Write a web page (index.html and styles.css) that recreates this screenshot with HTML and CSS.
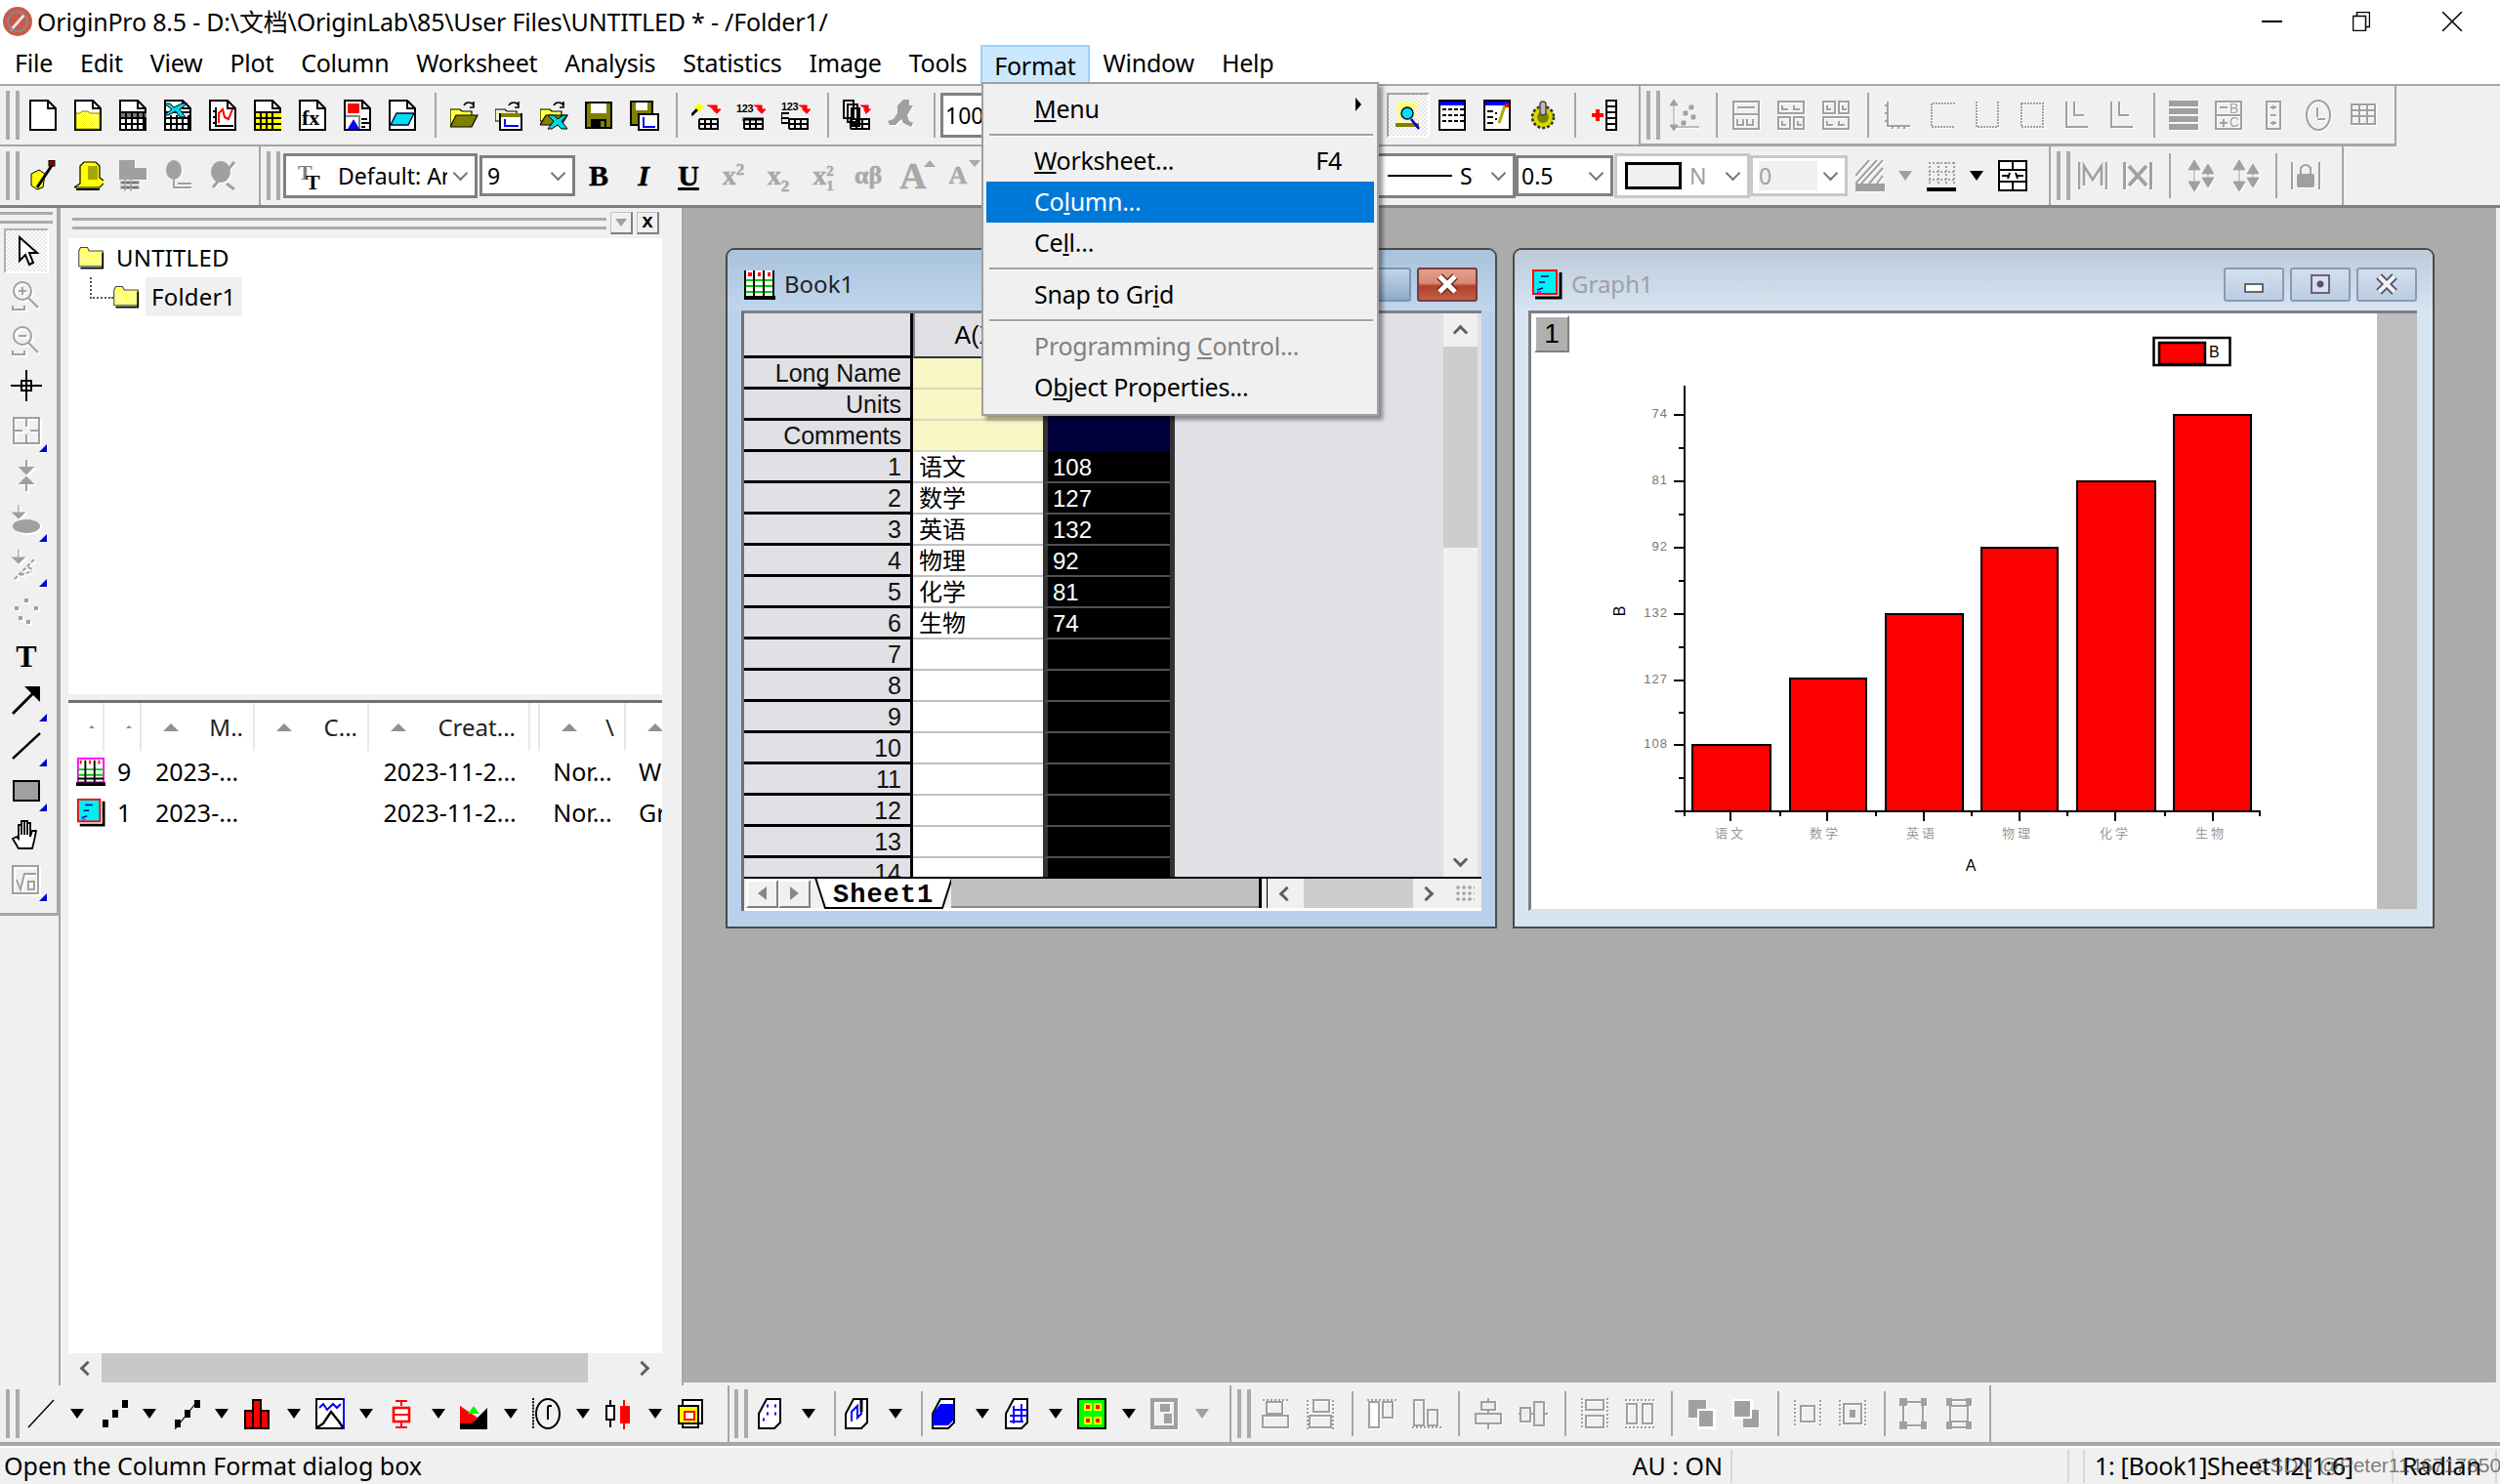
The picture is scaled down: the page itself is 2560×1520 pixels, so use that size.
FILE: index.html
```html
<!DOCTYPE html>
<html lang="en">
<head>
  <meta charset="UTF-8">
  <link rel="stylesheet" href="styles.css">
  <title>OriginPro 8.5</title>
</head>
<body>

<!-- icon sheet -->
<svg class="defs" width="0" height="0">
  <defs>
    <pattern id="dy" width="1" height="1" patternUnits="userSpaceOnUse"><rect width="1" height="1" fill="#ffff00"/><rect width=".5" height=".5" fill="#fff"/><rect x=".5" y=".5" width=".5" height=".5" fill="#fff"/></pattern>
    <symbol id="s-page" viewBox="0 0 15 16"><path d="M.5.5h9l4 4v11H.5z" fill="#fff" stroke="#000"/><path d="M9.5.5v4h4" fill="none" stroke="#000"/></symbol>
    <symbol id="s-fold" viewBox="0 0 15 16"><use href="#s-page"/><path d="M1 7h2l1-1h3l1 1h5v8H1z" fill="url(#dy)" stroke="#808000" stroke-width=".5"/></symbol>
    <symbol id="s-wks" viewBox="0 0 15 16"><use href="#s-page"/><rect x="1" y="6" width="13" height="3" fill="#777"/><path d="M0 6.5h14M0 9.5h14M0 12.5h14M3.5 6v9M6.5 6v9M9.5 6v9M12.5 6v9" stroke="#000" fill="none"/></symbol>
    <symbol id="s-xl" viewBox="0 0 15 16"><use href="#s-page"/><path d="M1 6.5h13M1 9.5h13M1 12.5h13M3.5 8v7M6.5 8v7M9.5 8v7M12.5 8v7" stroke="#000" fill="none"/><path d="M0 2h3l2 2 4-2 3 0-4 3 3 4h-3L6 6 2 8H0l4-3z" fill="#00d8e8" stroke="#000" stroke-width=".5"/></symbol>
    <symbol id="s-gr" viewBox="0 0 15 16"><use href="#s-page"/><path d="M3.5 4v9.500h9M2 12h2M2 9h2M2 6h2M6 14v-1M9 14v-1" stroke="#000" fill="none"/><path d="M5 12V7l2-2 1 4 2 1 2-5" stroke="#f00" fill="none"/></symbol>
    <symbol id="s-mat" viewBox="0 0 15 16"><use href="#s-page"/><rect x="1" y="6" width="13" height="9" fill="#ff0"/><path d="M0 6.500h14M0 9.500h14M0 12.500h14M3.500 6v9M6.500 6v9M9.500 6v9" stroke="#000" fill="none"/></symbol>
    <symbol id="s-fx" viewBox="0 0 15 16"><use href="#s-page"/><text x="1.500" y="13" class="ic-tx">fx</text></symbol>
    <symbol id="s-lay" viewBox="0 0 15 16"><use href="#s-page"/><rect x="2" y="2" width="6" height="5" fill="#f00"/><path d="M1 8.500h7M8 8v7" stroke="#888"/><path d="M2 15l3-5 3 5z" fill="#00f"/><path d="M9 10h3M9 12h4M9 14h2" stroke="#000"/></symbol>
    <symbol id="s-note" viewBox="0 0 15 16"><use href="#s-page"/><path d="M4 7h9l-3 6H1z" fill="#00e0f0" stroke="#004" stroke-width=".7"/></symbol>
    <symbol id="s-open" viewBox="0 0 15 16"><path d="M0 5h5l1 1h5v7H0z" fill="url(#dy)" stroke="#000" stroke-width=".6"/><path d="M0 14l3-6h11l-3 6z" fill="#808000" stroke="#000" stroke-width=".6"/><path d="M7 3c1-2 4-2 5 0M12 1v3h-2" stroke="#000" fill="none" stroke-width=".8"/></symbol>
    <symbol id="s-openp" viewBox="0 0 15 16"><path d="M0 5h5l1 1h5v5H0z" fill="url(#dy)" stroke="#000" stroke-width=".6"/><path d="M7 3c1-2 4-2 5 0M12 1v3h-2" stroke="#000" fill="none" stroke-width=".8"/><path d="M2.500 7.500h11v8h-11z" fill="#fff" stroke="#000"/><rect x="3" y="7" width="10" height="2" fill="#808000"/><path d="M5 10v3.500h7" stroke="#00f" fill="none"/></symbol>
    <symbol id="s-openx" viewBox="0 0 15 16"><path d="M0 5h5l1 1h5v5H0z" fill="url(#dy)" stroke="#000" stroke-width=".6"/><path d="M0 13l3-5h11l-3 5z" fill="#808000" stroke="#000" stroke-width=".6"/><path d="M7 3c1-2 4-2 5 0M12 1v3h-2" stroke="#000" fill="none" stroke-width=".8"/><path d="M4 8h3l2 2 3-2h2l-3 3 3 4h-3l-2-2-3 2H4l3-4z" fill="#00d8e8" stroke="#000" stroke-width=".5"/></symbol>
    <symbol id="s-save" viewBox="0 0 15 16"><rect x=".5" y="1.500" width="13" height="13" fill="#808000" stroke="#000"/><rect x="3" y="2" width="8" height="5" fill="#fff"/><rect x="3" y="10" width="8" height="5" fill="#000"/><rect x="8" y="11" width="2" height="3" fill="#808000"/></symbol>
    <symbol id="s-savep" viewBox="0 0 15 16"><rect x=".5" y="1" width="11" height="12" fill="#808000" stroke="#000"/><rect x="3" y="1.500" width="6" height="4" fill="#fff"/><rect x="4.500" y="7.500" width="10" height="8" fill="#fff" stroke="#000"/><path d="M7 9v5h6" stroke="#00f" fill="none"/></symbol>
    <symbol id="s-sheet" viewBox="0 0 15 16"><path d="M4 10h10M4 12.500h10M4 15h10M4 10v5M7 10v5M10 10v5M13.500 10v5" stroke="#000" fill="none"/></symbol>
    <symbol id="s-wiz" viewBox="0 0 15 16"><use href="#s-sheet"/><path d="M0 8l4-4" stroke="#000" stroke-width="1.500"/><path d="M4 1l1 2 2 1-2 1-1 2-1-2-2-1 2-1z" fill="#ff0"/><path d="M8 3h5v3M11 5h4l-2 2z" stroke="#f00" fill="#f00" stroke-width=".6"/></symbol>
    <symbol id="s-num" viewBox="0 0 15 16"><rect x="3" y="9" width="11" height="2" fill="#777"/><use href="#s-sheet"/><text x="0" y="6.500" class="ic-num">123</text><path d="M9 3h4v3M11 5h4l-2 2z" stroke="#f00" fill="#f00" stroke-width=".6"/></symbol>
    <symbol id="s-num2" viewBox="0 0 15 16"><use href="#s-sheet"/><path d="M0 7h4M0 9.500h4M0 12h4M0 7v5" stroke="#000" fill="none"/><text x="0" y="5.500" class="ic-num">123</text><path d="M9 3h4v3M11 5h4l-2 2z" stroke="#f00" fill="#f00" stroke-width=".6"/></symbol>
    <symbol id="s-pages" viewBox="0 0 15 16"><path d="M.5.500h5v9h-5zM2.500 2.500h5v9h-5zM4.500 4.500h4v9h-4z" fill="#fff" stroke="#000"/><use href="#s-sheet"/><path d="M9 3h4v3M11 5h3l-2 2z" stroke="#f00" fill="#f00" stroke-width=".6"/></symbol>
    <symbol id="s-run" viewBox="0 0 15 16"><path d="M8 0h3v3h2l-3 5 1 3 2 1-1 2-4-2-1-2-3 3H1l-1-2 3-1 2-3 0-4z" fill="#a0a0a0"/></symbol>
    <symbol id="s-find" viewBox="0 0 15 16"><rect x="2" y="1" width="10" height="12" fill="url(#dy)"/><rect x="1" y="12" width="12" height="2" fill="#808000"/><circle cx="7" cy="7" r="3" fill="#00e0f0" stroke="#004" stroke-width=".7"/><path d="M9 10l4 5" stroke="#00c" stroke-width="1.300"/></symbol>
    <symbol id="s-cal" viewBox="0 0 15 16"><rect x=".5" y=".5" width="13" height="15" fill="#fff" stroke="#000"/><rect x="1" y="1" width="12" height="2" fill="#00f"/><path d="M2 5h11M2 8h11M2 11h11" stroke="#000" stroke-dasharray="2 1"/></symbol>
    <symbol id="s-edit" viewBox="0 0 15 16"><rect x=".5" y=".5" width="13" height="15" fill="#fff" stroke="#000"/><rect x="1" y="1" width="12" height="2" fill="#00f"/><path d="M2 6h3M2 9h3M2 12h3M6 7h1M6 10h1" stroke="#000"/><path d="M8 12l3-9" stroke="#aa0" stroke-width="1.500"/><rect x="11" y="2" width="2" height="2" fill="#f00"/></symbol>
    <symbol id="s-gear" viewBox="0 0 15 16"><circle cx="7.500" cy="9" r="5.500" fill="#d8d800" stroke="#333" stroke-width="1.300" stroke-dasharray="1.500 1"/><circle cx="7.500" cy="9" r="3" fill="#808000"/><rect x="6" y="1" width="3" height="7" rx="1.500" fill="#bbb" stroke="#444" stroke-width=".7"/></symbol>
    <symbol id="s-addc" viewBox="0 0 15 16"><rect x="8.500" y=".5" width="5" height="15" fill="#fff" stroke="#000"/><path d="M9 3.500h4M9 6.500h4M9 9.500h4M9 12.500h4" stroke="#000"/><path d="M1 8h6M4 5v6" stroke="#f00" stroke-width="2"/></symbol>
    <symbol id="s-brush" viewBox="0 0 15 16"><path d="M1 7l4-2 3 2-1 7-3 1-3-2z" fill="#ff0" stroke="#000" stroke-width=".5"/><path d="M4 14l6-9 2-3" stroke="#000" stroke-width="1.500"/><rect x="10" y="0" width="3" height="3" fill="#800" stroke="#000" stroke-width=".5"/></symbol>
    <symbol id="s-pot" viewBox="0 0 15 16"><path d="M0 14l3-2V3l2-2h6l2 2v6l3 2-3 3z" fill="#ff0" stroke="#000" stroke-width=".6"/><rect x="7" y="3" width="5" height="7" fill="#808000" opacity=".7"/><path d="M1 15h12" stroke="#000"/></symbol>
    <symbol id="s-d1" viewBox="0 0 15 16"><path d="M0 0h8v4h6v6H0z" fill="#a0a0a0"/><path d="M1 11h9v1H1zM1 13.500h9v1H1zM3 10v6M6 10v6" stroke="#a0a0a0" stroke-width=".7"/></symbol>
    <symbol id="s-d2" viewBox="0 0 15 16"><ellipse cx="5" cy="5" rx="4" ry="5" fill="#a0a0a0"/><path d="M5 10v4h9M7 12h7" stroke="#a0a0a0" fill="none"/></symbol>
    <symbol id="s-d3" viewBox="0 0 15 16"><ellipse cx="6" cy="6" rx="5" ry="5.500" fill="#a0a0a0"/><path d="M13 1L2 14M9 12l4 3" stroke="#a0a0a0" stroke-width="1.500" fill="none"/></symbol>
    <symbol id="s-T" viewBox="0 0 15 16"><text x="0" y="10" class="ic-t g">T</text><text x="4" y="15" class="ic-t">T</text></symbol>
    <symbol id="s-pat" viewBox="0 0 15 16"><path d="M0 8L7 0M0 12L11 0M3 12L14 0M7 12l7-8M11 12l3-4" stroke="#a0a0a0"/><rect y="12" width="15" height="4" fill="#a0a0a0"/></symbol>
    <symbol id="s-bor" viewBox="0 0 15 16"><path d="M1.500 1v12M6 1v12M10 1v12M14 1v12M1 1.500h13M1 6h13M1 10h13" stroke="#a0a0a0" stroke-dasharray="1 1" fill="none"/><rect y="14" width="15" height="2" fill="#000"/></symbol>
    <symbol id="s-tbl" viewBox="0 0 15 16"><rect x=".5" y=".5" width="14" height="15" fill="#fff" stroke="#000"/><path d="M0 5h15M0 11h15M7.500 0v5M7.500 11v5M2 8h4M9 8h4" stroke="#000"/><path d="M6 6.500l-1 3M9 6.500l1 3" stroke="#000"/></symbol>
    <symbol id="s-dgrid" viewBox="0 0 15 16"><path d="M2 0l-2 3h4zM2 16l-2-3h4zM2 3v10M10 3h2v2h-2zM7 6h2v2H7zM11 8h2v2h-2zM6 11h2v2H6z" fill="#a0a0a0" stroke="#a0a0a0" stroke-width=".5"/><path d="M1 14h14" stroke="#a0a0a0" stroke-width=".7"/></symbol>
    <symbol id="s-l1" viewBox="0 0 15 16"><path d="M1 1h13v14H1zM3 4h9M3 10v3h3v-3M8 10v3h3v-3" fill="none" stroke="#a0a0a0"/><path d="M1 7.500h13" stroke="#a0a0a0"/></symbol>
    <symbol id="s-l2" viewBox="0 0 15 16"><path d="M1 1h13v6H1zM1 9h6v6H1zM9 9h5v6H9zM3 3v2h3M9 3v2h3M3 11v2h2M11 11v2h2" fill="none" stroke="#a0a0a0"/></symbol>
    <symbol id="s-l3" viewBox="0 0 15 16"><path d="M1 1h6v6H1zM9 1h5v6H9zM1 9h13v6H1zM3 3v2h2M11 3v2h2M3 11v2h3M9 11v2h3" fill="none" stroke="#a0a0a0"/></symbol>
    <symbol id="s-ax1" viewBox="0 0 15 16"><path d="M2.500 1v12.500H14" fill="none" stroke="#a0a0a0"/><path d="M1 3h1M1 7h1M1 11h1M5 15v-1M8 15v-1M11 15v-1" stroke="#a0a0a0"/></symbol>
    <symbol id="s-ax2" viewBox="0 0 15 16"><path d="M14 2H2v12h12" fill="none" stroke="#a0a0a0" stroke-dasharray="1 .5"/></symbol>
    <symbol id="s-ax3" viewBox="0 0 15 16"><path d="M2 1v13h11V1" fill="none" stroke="#a0a0a0" stroke-dasharray="1 .5"/></symbol>
    <symbol id="s-ax4" viewBox="0 0 15 16"><rect x="2" y="2" width="11" height="12" fill="none" stroke="#a0a0a0" stroke-dasharray="1 .5"/></symbol>
    <symbol id="s-ax5" viewBox="0 0 15 16"><path d="M2 1v13h11M6 1v7h5" fill="none" stroke="#a0a0a0"/></symbol>
    <symbol id="s-lines" viewBox="0 0 15 16"><path d="M0 2h15M0 6h15M0 10h15M0 14h15" stroke="#a0a0a0" stroke-width="3"/></symbol>
    <symbol id="s-bc" viewBox="0 0 15 16"><rect x="1" y="1" width="13" height="14" fill="none" stroke="#a0a0a0"/><path d="M1 8h13M3 4h4M3 12h4M5 10v4" stroke="#a0a0a0"/><text x="8" y="7" class="ic-s">B</text><text x="8" y="14" class="ic-s">C</text></symbol>
    <symbol id="s-col" viewBox="0 0 15 16"><rect x="4" y="1" width="7" height="14" fill="none" stroke="#a0a0a0"/><path d="M6 4h3M6 8h3M6 12h3M7.500 3v2M7.500 11v2" stroke="#a0a0a0"/></symbol>
    <symbol id="s-clk" viewBox="0 0 15 16"><ellipse cx="7.500" cy="8" rx="6" ry="7.500" fill="none" stroke="#a0a0a0"/><path d="M7 4v5M7 10h4" stroke="#a0a0a0"/></symbol>
    <symbol id="s-gtb" viewBox="0 0 15 16"><rect x="1.500" y="2.500" width="12" height="10" fill="none" stroke="#a0a0a0"/><path d="M1 5.500h12M1 8.500h12M5.500 3v9M9.500 3v9" stroke="#a0a0a0"/></symbol>
    <symbol id="s-M" viewBox="0 0 15 16"><path d="M.5 1v14M14.500 1v14M3 13V3l4.500 7L12 3v10" fill="none" stroke="#a0a0a0" stroke-width="1.300"/></symbol>
    <symbol id="s-X" viewBox="0 0 15 16"><path d="M.5 1v14M14.500 1v14M3 3l9 10M12 3L3 13" fill="none" stroke="#a0a0a0" stroke-width="2"/></symbol>
    <symbol id="s-updn" viewBox="0 0 15 16"><path d="M5 0l3 5H2zM5 16l3-5H2zM12 2l3 5H9zM12 14l3-5H9zM5 4v8M12 4v8" fill="#a0a0a0" stroke="#a0a0a0" stroke-width=".5"/></symbol>
    <symbol id="s-lock" viewBox="0 0 15 16"><path d="M.5 1v14M14.500 1v14" stroke="#a0a0a0"/><rect x="3" y="7" width="9" height="7" rx="1" fill="#a0a0a0"/><path d="M5 7V4q2.500-3 5 0v3" stroke="#a0a0a0" fill="none"/></symbol>
    <symbol id="s-line" viewBox="0 0 15 16"><path d="M1 15L14 1" stroke="#000" stroke-width=".7"/></symbol>
    <symbol id="s-dots" viewBox="0 0 15 16"><path d="M2 11h3v4H2zM7 6h3v4H7zM12 1h3v4h-3z"/></symbol>
    <symbol id="s-lsym" viewBox="0 0 15 16"><path d="M2 11h3v4H2zM7 6h3v4H7zM12 1h3v4h-3z"/><path d="M2 16L14 1" stroke="#000" stroke-width=".6"/></symbol>
    <symbol id="s-bar" viewBox="0 0 15 16"><rect x="1" y="6.500" width="4" height="9" fill="#f00" stroke="#000"/><rect x="5" y="1" width="4" height="14.500" fill="#f00" stroke="#000"/><rect x="9" y="6.500" width="4" height="9" fill="#f00" stroke="#000"/></symbol>
    <symbol id="s-mul" viewBox="0 0 15 16"><rect x=".5" y=".5" width="14" height="15" fill="#fff" stroke="#000"/><path d="M14.500 0v16" stroke="#00f"/><path d="M2 5l2-2 2 3 3-3 2 2 2-2" stroke="#00f" fill="none"/><path d="M1 15l3-2 4-6 4 5 2 3" stroke="#000" fill="none" stroke-width="1.200"/></symbol>
    <symbol id="s-box" viewBox="0 0 15 16"><path d="M4 1.500h6M7 1.500V4M7 12v3M4 15h6" stroke="#f00"/><rect x="3" y="5" width="8" height="7" fill="#fff" stroke="#f00" stroke-width="1.300"/><path d="M3 8.500h8" stroke="#f00"/></symbol>
    <symbol id="s-area" viewBox="0 0 15 16"><path d="M0 4l7 8 7-7v11H0z"/><path d="M0 4v9h6l3-3z" fill="#f00"/><path d="M4 8l3-4 3 4z" fill="#0f0"/></symbol>
    <symbol id="s-pol" viewBox="0 0 15 16"><path d="M.5 0v16" stroke="#000" stroke-dasharray="1 .6"/><ellipse cx="8" cy="8" rx="6" ry="7.500" fill="none" stroke="#000"/><path d="M8 4v7M8 4h2" stroke="#000"/></symbol>
    <symbol id="s-stk" viewBox="0 0 15 16"><path d="M3 1v14" stroke="#000"/><rect x="1" y="4" width="4" height="7" fill="#fff" stroke="#000"/><path d="M10 1v15" stroke="#f00"/><rect x="8" y="4" width="5" height="9" fill="#f00"/></symbol>
    <symbol id="s-tpl" viewBox="0 0 15 16"><path d="M3 1h10v12h-2v2H3z" fill="#fff" stroke="#000"/><rect x="1" y="4" width="10" height="9" fill="#ff0" stroke="#000"/><rect x="4" y="7" width="5" height="4" fill="#fff" stroke="#f00"/></symbol>
    <symbol id="s-3a" viewBox="0 0 15 16"><path d="M5 .5h7v12l-3 3H1V8z" fill="#fff" stroke="#000"/><path d="M5 4h1M9 4h1M5 8h1M9 8h1M3 11h1" stroke="#00f" stroke-width="1.500"/></symbol>
    <symbol id="s-3b" viewBox="0 0 15 16"><path d="M5 .5h7v12l-3 3H1V8z" fill="#fff" stroke="#000"/><path d="M4 12V7l3-3v6l2-2V3" fill="none" stroke="#00f"/><path d="M9 1v6" stroke="#000" stroke-width="1.500"/></symbol>
    <symbol id="s-3c" viewBox="0 0 15 16"><path d="M5 .5h7v12l-3 3H1V8z" fill="#fff" stroke="#000"/><path d="M5 3h7v8l-3 3H1V8z" fill="#00f"/></symbol>
    <symbol id="s-3d" viewBox="0 0 15 16"><path d="M5 .5h7v12l-3 3H1V8z" fill="#fff" stroke="#000"/><path d="M3 9h9M3 12h7M5 6h7M5 4v9M9 3v9" stroke="#00f" fill="none"/></symbol>
    <symbol id="s-cont" viewBox="0 0 15 16"><rect x=".5" y=".5" width="14" height="15" fill="#0f0" stroke="#000"/><path d="M4 3h3v3H4zM9 3h3v3H9zM4 10h3v3H4zM9 10h3v3H9z" fill="#f00" stroke="#ff0"/></symbol>
    <symbol id="s-tern" viewBox="0 0 15 16"><rect x="1" y="1" width="12" height="14" fill="none" stroke="#a0a0a0" stroke-width="2"/><path d="M5 3h5v4H5zM7 8h4v5H7z" fill="#a0a0a0"/></symbol>
    <symbol id="s-a1" viewBox="0 0 15 16"><path d="M1 1h13M1 15h13" stroke="#a0a0a0" stroke-dasharray="1 1"/><rect x="3" y="2" width="8" height="6" fill="none" stroke="#a0a0a0"/><rect x="1" y="9" width="13" height="6" fill="none" stroke="#a0a0a0"/></symbol>
    <symbol id="s-a2" viewBox="0 0 15 16"><path d="M1 1v15M14 1v15" stroke="#a0a0a0" stroke-dasharray="1 1"/><rect x="4" y="1" width="8" height="6" fill="none" stroke="#a0a0a0"/><rect x="2" y="9" width="11" height="6" fill="none" stroke="#a0a0a0"/></symbol>
    <symbol id="s-a3" viewBox="0 0 15 16"><path d="M0 1h15" stroke="#a0a0a0" stroke-dasharray="1 1"/><rect x="1" y="2" width="5" height="13" fill="#fff" stroke="#a0a0a0"/><rect x="8" y="2" width="5" height="8" fill="none" stroke="#a0a0a0"/></symbol>
    <symbol id="s-a4" viewBox="0 0 15 16"><path d="M0 15h15" stroke="#a0a0a0" stroke-dasharray="1 1"/><rect x="1" y="1" width="5" height="13" fill="none" stroke="#a0a0a0"/><rect x="8" y="6" width="5" height="8" fill="none" stroke="#a0a0a0"/></symbol>
    <symbol id="s-a5" viewBox="0 0 15 16"><path d="M7.500 0v16" stroke="#a0a0a0"/><rect x="4" y="2" width="7" height="4" fill="#eee" stroke="#a0a0a0"/><rect x="1" y="8" width="13" height="5" fill="#eee" stroke="#a0a0a0"/></symbol>
    <symbol id="s-a6" viewBox="0 0 15 16"><path d="M0 8h15" stroke="#a0a0a0"/><rect x="1" y="5" width="5" height="7" fill="#eee" stroke="#a0a0a0"/><rect x="8" y="2" width="5" height="12" fill="#eee" stroke="#a0a0a0"/></symbol>
    <symbol id="s-a7" viewBox="0 0 15 16"><rect x="3" y="1" width="9" height="5" fill="none" stroke="#a0a0a0"/><rect x="3" y="9" width="9" height="6" fill="none" stroke="#a0a0a0"/><path d="M1 0v16M14 0v16" stroke="#a0a0a0" stroke-dasharray="1 1"/></symbol>
    <symbol id="s-a8" viewBox="0 0 15 16"><rect x="1" y="3" width="5" height="10" fill="none" stroke="#a0a0a0"/><rect x="9" y="3" width="5" height="10" fill="none" stroke="#a0a0a0"/><path d="M0 1h15M0 15h15" stroke="#a0a0a0" stroke-dasharray="1 1"/></symbol>
    <symbol id="s-fr" viewBox="0 0 15 16"><rect x="1" y="1" width="9" height="9" fill="#a0a0a0"/><rect x="6" y="6" width="8" height="9" fill="#a0a0a0" stroke="#fff"/></symbol>
    <symbol id="s-bk" viewBox="0 0 15 16"><rect x="6" y="6" width="8" height="9" fill="#a0a0a0"/><rect x="1" y="1" width="9" height="9" fill="#a0a0a0" stroke="#fff"/></symbol>
    <symbol id="s-g1" viewBox="0 0 15 16"><rect x="4" y="4" width="7" height="8" fill="none" stroke="#a0a0a0"/><path d="M1 1v14M14 1v14" stroke="#a0a0a0" stroke-dasharray="1 1"/></symbol>
    <symbol id="s-g2" viewBox="0 0 15 16"><rect x="3" y="3" width="9" height="10" fill="none" stroke="#a0a0a0"/><rect x="6" y="6" width="3" height="4" fill="#a0a0a0"/><path d="M1 1v14M14 1v14" stroke="#a0a0a0" stroke-dasharray="1 1"/></symbol>
    <symbol id="s-h1" viewBox="0 0 15 16"><rect x="2" y="2" width="10" height="12" fill="none" stroke="#a0a0a0"/><path d="M0 0h4v4H0zM11 0h3v4h-3zM0 12h4v4H0zM11 12h3v4h-3z" fill="#a0a0a0"/></symbol>
    <symbol id="s-h2" viewBox="0 0 15 16"><path d="M3 1h9M3 15h9" stroke="#a0a0a0"/><rect x="3" y="4" width="9" height="8" fill="none" stroke="#a0a0a0"/><path d="M1 0h3v4H1zM11 0h3v4h-3zM1 12h3v4H1zM11 12h3v4h-3z" fill="#a0a0a0"/></symbol>
    <symbol id="t-arrow" viewBox="0 0 16 16"><path d="M4.500 1v12l3-3 2 5 2-1-2-5h4z" fill="#fff" stroke="#000"/></symbol>
    <symbol id="t-zin" viewBox="0 0 16 16"><circle cx="6" cy="5.500" r="4.500" fill="none" stroke="#a0a0a0"/><path d="M4 5.500h4M6 3.500v4M9 9l5 5M1 13v2h6v-2" stroke="#a0a0a0" fill="none"/></symbol>
    <symbol id="t-zout" viewBox="0 0 16 16"><circle cx="6" cy="5.500" r="4.500" fill="none" stroke="#a0a0a0"/><path d="M4 5.500h4M9 9l5 5M1 13v2h6v-2" stroke="#a0a0a0" fill="none"/></symbol>
    <symbol id="t-cross" viewBox="0 0 16 16"><path d="M8 0v16M0 8h16" stroke="#000"/><rect x="5.500" y="5.500" width="5" height="5" fill="none" stroke="#000"/></symbol>
    <symbol id="t-reg" viewBox="0 0 16 16"><rect x="1.500" y="1.500" width="13" height="13" fill="none" stroke="#a0a0a0"/><path d="M8 2v4M8 10v4M2 8h4M10 8h4" stroke="#a0a0a0"/></symbol>
    <symbol id="t-adj" viewBox="0 0 16 16"><path d="M8 0v4M5 4h6L8 7zM5 12h6L8 9zM8 12v4" fill="#a0a0a0" stroke="#a0a0a0"/></symbol>
    <symbol id="t-ell" viewBox="0 0 16 16"><path d="M4 0v4M1 4h6L4 7z" fill="#a0a0a0" stroke="#a0a0a0" stroke-width=".6"/><ellipse cx="8" cy="11" rx="7" ry="3.500" fill="#a0a0a0"/></symbol>
    <symbol id="t-sc" viewBox="0 0 16 16"><path d="M4 0v4M1 4h6L4 7z" fill="#a0a0a0" stroke="#a0a0a0" stroke-width=".6"/><path d="M2 15L12 5M9 9l2 1M5 13l6-2" stroke="#a0a0a0" fill="none" stroke-dasharray="2 1"/></symbol>
    <symbol id="t-pts" viewBox="0 0 16 16"><path d="M7 2h2v2H7zM2 6h2v2H2zM12 6h2v2h-2zM4 11h2v2H4zM8 13h2v2H8z" fill="#a0a0a0"/></symbol>
    <symbol id="t-T" viewBox="0 0 16 16"><text x="8" y="14" text-anchor="middle" class="ic-big">T</text></symbol>
    <symbol id="t-ar" viewBox="0 0 16 16"><path d="M1 15L13 3" stroke="#000" stroke-width="1.500"/><path d="M7 1h8v8z"/></symbol>
    <symbol id="t-ln" viewBox="0 0 16 16"><path d="M1 15L15 2" stroke="#000" stroke-width="1.200"/></symbol>
    <symbol id="t-rc" viewBox="0 0 16 16"><rect x="1.500" y="3.500" width="13" height="10" fill="#a0a0a0" stroke="#000"/></symbol>
    <symbol id="t-hand" viewBox="0 0 16 16"><path d="M1 10l2-1 1 1V3h1.500v5V1H7v7V1h1.500v7V2H10v7l1-3h2l-1 5-1 4H4z" fill="#fff" stroke="#000" stroke-width=".9"/></symbol>
    <symbol id="t-eq" viewBox="0 0 16 16"><rect x="1" y="1" width="13" height="14" fill="none" stroke="#a0a0a0"/><path d="M3 8l2 5 2-8h6M9 9h3v4H9z" fill="none" stroke="#a0a0a0"/></symbol>
    <symbol id="w-book" viewBox="0 0 16 16"><rect x="1" y="1" width="14" height="13" fill="#fff"/><path d="M1 6h14M1 9h14M1 12h14" stroke="#0c0" stroke-width="1"/><path d="M5 1v14M10 1v14M.5 1v14M15 1v14" stroke="#000"/><rect x="2" y="2" width="2" height="2" fill="#f00"/><rect x="7" y="2" width="1.500" height="2" fill="#f00"/><rect x="12" y="2" width="1.500" height="2" fill="#f00"/><rect y="14" width="16" height="2"/></symbol>
    <symbol id="w-graph" viewBox="0 0 16 16"><rect x="1" y="1" width="12" height="12" fill="#00f0f0" stroke="#f00"/><path d="M5 4h4M4 7h3M3 11l3-1" stroke="#00a" stroke-width=".8"/><path d="M3 12h2" stroke="#f0f"/><path d="M15 2v13H2" stroke="#000" stroke-width="1.500" fill="none"/></symbol>
    <symbol id="w-bookl" viewBox="0 0 16 16"><rect x="1" y="1" width="14" height="13" fill="#fff" stroke="#f0f"/><path d="M1 7h14M1 10h14" stroke="#0c0"/><path d="M5 2v12M10 2v12M1 12h14" stroke="#000"/><path d="M2 3h1M7 3h1M12 3h1" stroke="#f00" stroke-width="2"/><rect y="14" width="16" height="2"/></symbol>
    <symbol id="w-dir" viewBox="0 0 16 16"><path d="M1 4l1-2h4l1 2h8v9H1z" fill="url(#dy)" stroke="#444" stroke-width=".6"/><path d="M2 14h13v-9" stroke="#000" stroke-width="1" fill="none"/></symbol>
    <symbol id="w-app" viewBox="0 0 16 16"><circle cx="8" cy="8" r="7.500" fill="#cc5a48"/><path d="M4 12l7-8 1 1-7 8z" fill="#e8e8f0"/><circle cx="8" cy="8" r="5" fill="none" stroke="#888"/></symbol>
    <symbol id="w-x" viewBox="0 0 28 24"><path d="M6 4l16 16M22 4L6 20" stroke="#556" stroke-width="8" fill="none"/><path d="M6 4l16 16M22 4L6 20" stroke="#f4f4f8" stroke-width="4" fill="none"/></symbol>
    <symbol id="w-xr" viewBox="0 0 28 24"><path d="M6 4l16 16M22 4L6 20" stroke="#6a2a20" stroke-width="8" fill="none"/><path d="M6 4l16 16M22 4L6 20" stroke="#fff" stroke-width="5" fill="none"/></symbol>
  </defs>
</svg>

<!-- title and menu -->
<header class="titlebar">
  <svg class="app-icon"><use href="#w-app"/></svg>
  <span class="title-text">OriginPro 8.5 - D:\文档\OriginLab\85\User Files\UNTITLED * - /Folder1/</span>
  <div class="caption">
    <span class="cap-min"></span>
    <svg class="cap-res" viewBox="0 0 18 20"><path d="M4.500 4.500v-4h13v15h-4M.5 4.500h13v15H.5z" fill="none" stroke="#000" stroke-width="1.500"/></svg>
    <svg class="cap-close" viewBox="0 0 22 20"><path d="M1 0l20 20M21 0L1 20" fill="none" stroke="#000" stroke-width="1.500"/></svg>
  </div>
</header>
<nav class="menubar">
  <span class="mi">File</span><span class="mi">Edit</span><span class="mi">View</span><span class="mi">Plot</span><span class="mi">Column</span><span class="mi">Worksheet</span><span class="mi">Analysis</span><span class="mi">Statistics</span><span class="mi">Image</span><span class="mi">Tools</span><span class="mi active">Format</span><span class="mi">Window</span><span class="mi">Help</span>
</nav>

<!-- standard toolbar -->
<div class="row row-one">
  <div class="tb tb-std">
    <span class="grip"></span>
    <svg class="ic"><use href="#s-page"/></svg><svg class="ic"><use href="#s-fold"/></svg><svg class="ic"><use href="#s-wks"/></svg><svg class="ic"><use href="#s-xl"/></svg><svg class="ic"><use href="#s-gr"/></svg><svg class="ic"><use href="#s-mat"/></svg><svg class="ic"><use href="#s-fx"/></svg><svg class="ic"><use href="#s-lay"/></svg><svg class="ic"><use href="#s-note"/></svg>
    <span class="sep"></span>
    <svg class="ic"><use href="#s-open"/></svg><svg class="ic"><use href="#s-openp"/></svg><svg class="ic"><use href="#s-openx"/></svg><svg class="ic"><use href="#s-save"/></svg><svg class="ic"><use href="#s-savep"/></svg>
    <span class="sep"></span>
    <svg class="ic"><use href="#s-wiz"/></svg><svg class="ic"><use href="#s-num"/></svg><svg class="ic"><use href="#s-num2"/></svg>
    <span class="sep"></span>
    <svg class="ic"><use href="#s-pages"/></svg><svg class="ic dis"><use href="#s-run"/></svg>
    <span class="sep"></span>
    <span class="combo zoomc">100</span>
    <div class="tb-end">
      <span class="ic-on"><svg class="ic"><use href="#s-find"/></svg></span>
      <svg class="ic"><use href="#s-cal"/></svg><svg class="ic"><use href="#s-edit"/></svg><svg class="ic"><use href="#s-gear"/></svg>
      <span class="sep"></span>
      <svg class="ic"><use href="#s-addc"/></svg>
    </div>
  </div>
  <div class="tb tb-fmt">
    <span class="grip"></span>
    <svg class="ic dis"><use href="#s-dgrid"/></svg><span class="sep"></span>
    <svg class="ic dis"><use href="#s-l1"/></svg><svg class="ic dis"><use href="#s-l2"/></svg><svg class="ic dis"><use href="#s-l3"/></svg><span class="sep"></span>
    <svg class="ic dis"><use href="#s-ax1"/></svg><svg class="ic dis"><use href="#s-ax2"/></svg><svg class="ic dis"><use href="#s-ax3"/></svg><svg class="ic dis"><use href="#s-ax4"/></svg><svg class="ic dis"><use href="#s-ax5"/></svg><svg class="ic dis"><use href="#s-ax5"/></svg><span class="sep"></span>
    <svg class="ic dis"><use href="#s-lines"/></svg><svg class="ic dis"><use href="#s-bc"/></svg><svg class="ic dis"><use href="#s-col"/></svg><svg class="ic dis"><use href="#s-clk"/></svg><svg class="ic dis"><use href="#s-gtb"/></svg>
  </div>
</div>

<!-- format toolbar -->
<div class="row row-two">
  <div class="tb tb-tools">
    <span class="grip"></span>
    <svg class="ic"><use href="#s-brush"/></svg><svg class="ic"><use href="#s-pot"/></svg><svg class="ic dis"><use href="#s-d1"/></svg><svg class="ic dis"><use href="#s-d2"/></svg><svg class="ic dis"><use href="#s-d3"/></svg>
  </div>
  <div class="tb tb-style">
    <span class="grip"></span>
    <span class="combo fontc"><svg class="ic-t-svg"><use href="#s-T"/></svg><span class="clip fname">Default: Arial</span><i class="chev"></i></span>
    <span class="combo sizec"><span class="clip">9</span><i class="chev"></i></span>
    <span class="fx b">B</span><span class="fx i">I</span><span class="fx u">U</span>
    <span class="fx g">x<sup>2</sup></span><span class="fx g">x<sub>2</sub></span><span class="fx g stk-wrap">x<span class="stk"><b>2</b><b>1</b></span></span><span class="fx g greek">αβ</span><span class="fx g big up">A</span><span class="fx g small down">A</span>
    <div class="tb-end style-end">
      <span class="combo linec"><i class="ln"></i><span class="clip lname">Solid</span><i class="chev"></i></span>
      <span class="combo widthc"><span class="clip">0.5</span><i class="chev"></i></span>
      <span class="combo colorc off"><i class="swatch"></i><span class="clip">N</span><i class="chev"></i></span>
      <span class="combo zeroc off"><span class="clip inner">0</span><i class="chev"></i></span>
      <svg class="ic dis pat"><use href="#s-pat"/></svg><span class="drop dim"></span>
      <svg class="ic"><use href="#s-bor"/></svg><span class="drop"></span>
      <svg class="ic"><use href="#s-tbl"/></svg>
    </div>
  </div>
  <div class="tb tb-mask">
    <span class="grip"></span>
    <svg class="ic dis"><use href="#s-M"/></svg><svg class="ic dis"><use href="#s-X"/></svg><span class="sep"></span>
    <svg class="ic dis"><use href="#s-updn"/></svg><svg class="ic dis"><use href="#s-updn"/></svg><span class="sep"></span>
    <svg class="ic dis"><use href="#s-lock"/></svg>
  </div>
</div>

<main class="main">
  <!-- tools dock -->
  <aside class="dock">
    <div class="toolbox">
      <span class="grip-h"></span>
      <span class="tool on"><svg><use href="#t-arrow"/></svg></span>
      <span class="tool dis"><svg><use href="#t-zin"/></svg></span>
      <span class="tool dis"><svg><use href="#t-zout"/></svg></span>
      <span class="tool"><svg><use href="#t-cross"/></svg></span>
      <span class="tool dis more"><svg><use href="#t-reg"/></svg></span>
      <span class="tool dis"><svg><use href="#t-adj"/></svg></span>
      <span class="tool dis more"><svg><use href="#t-ell"/></svg></span>
      <span class="tool dis more"><svg><use href="#t-sc"/></svg></span>
      <span class="tool dis"><svg><use href="#t-pts"/></svg></span>
      <span class="tool"><svg><use href="#t-T"/></svg></span>
      <span class="tool more"><svg><use href="#t-ar"/></svg></span>
      <span class="tool more"><svg><use href="#t-ln"/></svg></span>
      <span class="tool more"><svg><use href="#t-rc"/></svg></span>
      <span class="tool"><svg><use href="#t-hand"/></svg></span>
      <span class="tool dis more"><svg><use href="#t-eq"/></svg></span>
    </div>
  </aside>

  <!-- project explorer -->
  <section class="explorer">
    <div class="pe-head">
      <span class="pe-grip"></span>
      <span class="pe-btn tri"></span>
      <span class="pe-btn x">x</span>
    </div>
    <div class="tree">
      <div class="node"><svg class="dir"><use href="#w-dir"/></svg><span class="node-tx">UNTITLED</span></div>
      <div class="node child"><span class="branch"></span><svg class="dir"><use href="#w-dir"/></svg><span class="node-tx sel">Folder1</span></div>
    </div>
    <div class="list">
      <div class="list-head">
        <span class="lh w37"><i class="sort tiny"></i></span>
        <span class="lh w38"><i class="sort tiny"></i></span>
        <span class="lh w116"><i class="sort"></i>M..</span>
        <span class="lh w117"><i class="sort"></i>C...</span>
        <span class="lh w165"><i class="sort"></i>Creat...</span>
        <span class="lh w10"></span>
        <span class="lh w88"><i class="sort"></i><b class="clip-v">\</b></span>
        <span class="lh w37 last"><i class="sort"></i></span>
      </div>
      <div class="list-row"><svg class="li-ic"><use href="#w-bookl"/></svg><span class="c1">9</span><span class="c2">2023-...</span><span class="c3">2023-11-2...</span><span class="c4">Nor...</span><span class="c5">W</span></div>
      <div class="list-row"><svg class="li-ic"><use href="#w-graph"/></svg><span class="c1">1</span><span class="c2">2023-...</span><span class="c3">2023-11-2...</span><span class="c4">Nor...</span><span class="c5">Gr</span></div>
    </div>
    <div class="hscroll">
      <i class="ar-l"></i><span class="thumb"></span><i class="ar-r"></i>
    </div>
  </section>

  <!-- MDI area -->
  <section class="mdi">
    <article class="win book">
      <div class="win-title">
        <svg class="win-ic"><use href="#w-book"/></svg><span class="win-name">Book1</span>
        <div class="win-btns"><span class="wb"></span><span class="wb close"><svg class="wx"><use href="#w-xr"/></svg></span></div>
      </div>
      <div class="win-body">
        <div class="sheet">
          <div class="sheet-main">
            <div class="grid">
              <div class="gr head"><span class="rh"></span><span class="ca">A(X)</span><span class="cb">B(Y)</span></div>
              <div class="gr meta"><span class="rh">Long Name</span><span class="ca"></span><span class="cb"></span></div>
              <div class="gr meta"><span class="rh">Units</span><span class="ca"></span><span class="cb"></span></div>
              <div class="gr meta"><span class="rh">Comments</span><span class="ca"></span><span class="cb"></span></div>
              <div class="gr"><span class="rh">1</span><span class="ca">语文</span><span class="cb">108</span></div>
              <div class="gr"><span class="rh">2</span><span class="ca">数学</span><span class="cb">127</span></div>
              <div class="gr"><span class="rh">3</span><span class="ca">英语</span><span class="cb">132</span></div>
              <div class="gr"><span class="rh">4</span><span class="ca">物理</span><span class="cb">92</span></div>
              <div class="gr"><span class="rh">5</span><span class="ca">化学</span><span class="cb">81</span></div>
              <div class="gr"><span class="rh">6</span><span class="ca">生物</span><span class="cb">74</span></div>
              <div class="gr"><span class="rh">7</span><span class="ca"></span><span class="cb"></span></div>
              <div class="gr"><span class="rh">8</span><span class="ca"></span><span class="cb"></span></div>
              <div class="gr"><span class="rh">9</span><span class="ca"></span><span class="cb"></span></div>
              <div class="gr"><span class="rh">10</span><span class="ca"></span><span class="cb"></span></div>
              <div class="gr"><span class="rh">11</span><span class="ca"></span><span class="cb"></span></div>
              <div class="gr"><span class="rh">12</span><span class="ca"></span><span class="cb"></span></div>
              <div class="gr"><span class="rh">13</span><span class="ca"></span><span class="cb"></span></div>
              <div class="gr"><span class="rh">14</span><span class="ca"></span><span class="cb"></span></div>
            </div>
            <div class="vscroll"><i class="ar-u"></i><span class="vthumb"></span><i class="ar-d"></i></div>
          </div>
          <div class="sheet-foot">
            <span class="nav-btn"><i class="tl"></i></span><span class="nav-btn"><i class="tr"></i></span>
            <svg class="tab" viewBox="0 0 146 32"><path d="M2 0l10 31h120l10-31z" fill="#fff" stroke="#000" stroke-width="2"/><text x="20" y="25">Sheet1</text></svg>
            <span class="tab-rest"></span>
            <span class="split"></span>
            <div class="fscroll"><i class="ar-l"></i><span class="fthumb"></span><i class="ar-r"></i></div>
            <span class="corner"></span>
          </div>
        </div>
      </div>
    </article>

    <article class="win graph">
      <div class="win-title">
        <svg class="win-ic small"><use href="#w-graph"/></svg><span class="win-name dim">Graph1</span>
        <div class="win-btns">
          <span class="wb plain"><i class="wmin"></i></span>
          <span class="wb plain"><i class="wmax"></i></span>
          <span class="wb plain"><svg class="wx"><use href="#w-x"/></svg></span>
        </div>
      </div>
      <div class="win-body">
        <div class="page">
          <span class="layer">1</span>
          <svg class="plot" viewBox="1568 320 866 612">
            <rect x="2205.500" y="345" width="78" height="28" fill="#fff" stroke="#000" stroke-width="2.500"/>
            <rect x="2211" y="350" width="47" height="22" fill="#f00" stroke="#000" stroke-width="2.500"/>
            <text x="2262" y="365" class="lg">B</text>
            <g fill="#f00" stroke="#000" stroke-width="2">
              <rect x="1733" y="762" width="80" height="68"/>
              <rect x="1833" y="694" width="78" height="136"/>
              <rect x="1931" y="628" width="79" height="202"/>
              <rect x="2029" y="560" width="78" height="270"/>
              <rect x="2127" y="492" width="80" height="338"/>
              <rect x="2226" y="424" width="79" height="406"/>
            </g>
            <path d="M1725 394v437M1715 830h600M1714 424h11M1714 492h11M1714 560h11M1714 628h11M1714 696h11M1714 762h11M1719 458h6M1719 526h6M1719 594h6M1719 662h6M1719 729h6M1719 796h6M1772 830v10M1871 830v10M1970 830v10M2068 830v10M2166 830v10M2266 830v10M1725 830v5M1823 830v5M1921 830v5M2019 830v5M2117 830v5M2217 830v5M2314 830v5" stroke="#000" stroke-width="2" fill="none"/>
            <g class="ytick">
              <text x="1708" y="427">74</text><text x="1708" y="495">81</text><text x="1708" y="563">92</text><text x="1708" y="631">132</text><text x="1708" y="699">127</text><text x="1708" y="765">108</text>
            </g>
            <g class="xtick">
              <text x="1772" y="857">语文</text><text x="1869" y="857">数学</text><text x="1968" y="857">英语</text><text x="2066" y="857">物理</text><text x="2166" y="857">化学</text><text x="2264" y="857">生物</text>
            </g>
            <text class="axt" x="2018" y="891" text-anchor="middle">A</text>
            <text class="axt" transform="translate(1664 625) rotate(-90)" text-anchor="middle">B</text>
          </svg>
        </div>
        <div class="page-side"></div>
      </div>
    </article>
  </section>

  <!-- Format menu -->
  <div class="dropdown">
    <div class="dd-item"><span><u>M</u>enu</span><i class="dd-arrow"></i></div>
    <hr>
    <div class="dd-item"><span><u>W</u>orksheet...</span><span class="key">F4</span></div>
    <div class="dd-item hot"><span>Co<u>l</u>umn...</span></div>
    <div class="dd-item"><span>Ce<u>l</u>l...</span></div>
    <hr>
    <div class="dd-item"><span>Snap to Gr<u>i</u>d</span></div>
    <hr>
    <div class="dd-item off"><span>Programming <u>C</u>ontrol...</span></div>
    <div class="dd-item"><span>O<u>b</u>ject Properties...</span></div>
  </div>
</main>

<!-- plot toolbar -->
<div class="row row-bottom">
  <div class="tb tb-plot">
    <span class="grip"></span>
    <svg class="ic ib"><use href="#s-line"/></svg><span class="drop"></span>
    <svg class="ic ib"><use href="#s-dots"/></svg><span class="drop"></span>
    <svg class="ic ib"><use href="#s-lsym"/></svg><span class="drop"></span>
    <svg class="ic ib"><use href="#s-bar"/></svg><span class="drop"></span>
    <svg class="ic ib"><use href="#s-mul"/></svg><span class="drop"></span>
    <svg class="ic ib"><use href="#s-box"/></svg><span class="drop"></span>
    <svg class="ic ib"><use href="#s-area"/></svg><span class="drop"></span>
    <svg class="ic ib"><use href="#s-pol"/></svg><span class="drop"></span>
    <svg class="ic ib"><use href="#s-stk"/></svg><span class="drop"></span>
    <svg class="ic ib"><use href="#s-tpl"/></svg>
  </div>
  <div class="tb tb-3d">
    <span class="grip"></span>
    <svg class="ic ic3"><use href="#s-3a"/></svg><span class="drop narrow"></span><span class="sep sep3"></span>
    <svg class="ic ic3"><use href="#s-3b"/></svg><span class="drop narrow"></span><span class="sep sep3"></span>
    <svg class="ic ic3"><use href="#s-3c"/></svg><span class="drop narrow"></span>
    <svg class="ic ic3"><use href="#s-3d"/></svg><span class="drop narrow"></span>
    <svg class="ic ic3"><use href="#s-cont"/></svg><span class="drop narrow"></span>
    <svg class="ic ic3 dis"><use href="#s-tern"/></svg><span class="drop narrow dim"></span>
  </div>
  <div class="tb tb-align">
    <span class="grip"></span>
    <svg class="ic dis al"><use href="#s-a1"/></svg><svg class="ic dis al"><use href="#s-a2"/></svg><span class="sep"></span>
    <svg class="ic dis al"><use href="#s-a3"/></svg><svg class="ic dis al"><use href="#s-a4"/></svg><span class="sep"></span>
    <svg class="ic dis al"><use href="#s-a5"/></svg><svg class="ic dis al"><use href="#s-a6"/></svg><span class="sep"></span>
    <svg class="ic dis al"><use href="#s-a7"/></svg><svg class="ic dis al"><use href="#s-a8"/></svg><span class="sep"></span>
    <svg class="ic dis al"><use href="#s-fr"/></svg><svg class="ic dis al"><use href="#s-bk"/></svg><span class="sep"></span>
    <svg class="ic dis al"><use href="#s-g1"/></svg><svg class="ic dis al"><use href="#s-g2"/></svg><span class="sep"></span>
    <svg class="ic dis al"><use href="#s-h1"/></svg><svg class="ic dis al"><use href="#s-h2"/></svg>
  </div>
</div>

<!-- status bar -->
<footer class="status">
  <span class="st-msg">Open the Column Format dialog box</span>
  <span class="st-au">AU : ON</span>
  <span class="st-gap"></span>
  <span class="st-small"></span>
  <span class="st-sel">1: [Book1]Sheet1!2[1:6]</span>
  <span class="st-rad">Radian</span>
  <span class="mark">CSDN @Peter1146717850</span>
</footer>

</body>
</html>
```

FILE: styles.css
```css
* {
  box-sizing: border-box;
}
html, body {
  margin: 0;
  padding: 0;
}
body {
  width: 2560px;
  height: 1520px;
  overflow: hidden;
  background: #f0f0f0;
  display: flex;
  flex-direction: column;
  font-family: "Noto Sans", "Noto Sans CJK SC", sans-serif;
  font-size: 25px;
  color: #000;
  position: relative;
}
.defs {
  position: absolute;
}
svg {
  display: block;
  flex: none;
}
.ic-tx {
  font: bold 11px "Liberation Serif", serif;
}
.ic-num {
  font: bold 5.5px "Liberation Sans", sans-serif;
  letter-spacing: -.2px;
}
.ic-t {
  font: bold 11px "Liberation Serif", serif;
}
.ic-t.g {
  fill: #808080;
}
.ic-s {
  font: 7px "Liberation Sans", sans-serif;
  fill: #a0a0a0;
}
.ic-big {
  font: bold 16px "Liberation Serif", serif;
}

/* title + menu */
.titlebar {
  height: 44px;
  background: #fff;
  display: flex;
  align-items: center;
  flex: none;
  position: relative;
}
.app-icon {
  width: 32px;
  height: 32px;
  margin: 0 4px 0 2px;
}
.title-text {
  font-size: 25px;
  white-space: nowrap;
  letter-spacing: -.2px;
  margin-top: -2px;
}
.caption {
  margin-left: auto;
  display: flex;
  align-items: center;
}
.cap-min {
  width: 21px;
  height: 2px;
  background: #000;
  margin-right: 72px;
}
.cap-res {
  width: 18px;
  height: 20px;
  margin-right: 73px;
}
.cap-close {
  width: 22px;
  height: 20px;
  margin-right: 38px;
}
.menubar {
  height: 42px;
  background: #fff;
  display: flex;
  flex: none;
  padding-left: 1px;
  align-items: stretch;
}
.mi {
  padding: 0 14px;
  line-height: 40px;
  white-space: nowrap;
  letter-spacing: -.25px;
}
.mi.active {
  background: #cce8ff;
  border: 2px solid #99d1ff;
  border-bottom: none;
  padding: 0 12px;
  line-height: 38px;
  height: 40px;
  margin-top: 2px;
}

/* toolbars */
.row {
  display: flex;
  flex: none;
  background: #f0f0f0;
}
.row-one {
  height: 64px;
  border-top: 2px solid #a6a6a6;
}
.row-two {
  height: 60px;
}
.tb {
  display: flex;
  align-items: center;
  height: 100%;
  position: relative;
}
.tb-std {
  width: 1680px;
  border-bottom: 2px solid #a6a6a6;
  border-right: 2px solid #a6a6a6;
}
.tb-fmt {
  width: 774px;
  border-bottom: 3px solid #a6a6a6;
  border-right: 2px solid #a6a6a6;
}
.tb-tools {
  width: 267px;
  border-right: 2px solid #a6a6a6;
}
.tb-style {
  width: 1833px;
  border-right: 2px solid #a6a6a6;
}
.tb-mask {
  width: 300px;
  border-right: 2px solid #a6a6a6;
}
.tb-end {
  margin-left: auto;
  display: flex;
  align-items: center;
}
.grip {
  width: 14px;
  height: 50px;
  margin: 0 10px 0 6px;
  border-left: 4px solid #ababab;
  border-right: 4px solid #ababab;
  flex: none;
}
.tb-style > .grip {
  margin-right: 3px;
}
.ic {
  width: 30px;
  height: 32px;
  margin-right: 16px;
}
.dis {
  filter: drop-shadow(1px 1px 0 #fff);
}
.sep {
  width: 2px;
  height: 46px;
  background: #a6a6a6;
  margin: 0 14px 0 1px;
  flex: none;
}
.ic-on {
  width: 44px;
  height: 46px;
  border: 2px solid #fff;
  border-left-color: #a0a0a0;
  border-top-color: #a0a0a0;
  background: repeating-conic-gradient(#fff 0 25%, #e4e4e4 0 50%) 0 0 / 4px 4px;
  display: flex;
  align-items: center;
  justify-content: center;
  margin-right: 9px;
}
.ic-on .ic {
  margin: 0;
}
.tb-end > .ic:last-child {
  margin-right: 20px;
}
.combo {
  display: flex;
  align-items: center;
  background: #fff;
  border: 3px solid #808080;
  height: 46px;
  flex: none;
  position: relative;
  overflow: hidden;
  font-size: 23px;
}
.zoomc {
  width: 70px;
  margin-left: -9px;
  padding-left: 2px;
}
.fontc {
  width: 199px;
  padding-left: 12px;
}
.ic-t-svg {
  width: 30px;
  height: 32px;
  margin-right: 11px;
}
.fname {
  flex: none;
  width: 106px;
  margin-right: auto;
}
.sizec {
  width: 98px;
  height: 42px;
  margin-left: 2px;
  margin-right: 1px;
  padding-left: 5px;
}
.clip {
  overflow: hidden;
  white-space: nowrap;
  flex: 1;
}
.chev {
  width: 11px;
  height: 11px;
  border-right: 2px solid #777;
  border-bottom: 2px solid #777;
  transform: rotate(45deg);
  margin: 0 9px 5px 8px;
  flex: none;
}
.fx {
  width: 46px;
  text-align: center;
  font: 900 30px/40px "Liberation Serif", serif;
  -webkit-text-stroke: .5px #000;
  flex: none;
  position: relative;
}
.fx.i {
  font-style: italic;
}
.fx.u {
  text-decoration: underline;
}
.fx.g {
  color: #a8a8a8;
  font-size: 28px;
  -webkit-text-stroke: .5px #a8a8a8;
}
.fx.big {
  font-size: 38px;
}
.fx.small {
  font-size: 26px;
}
.fx.greek {
  font-size: 26px;
}
.fx.up::after, .fx.down::after {
  content: "";
  position: absolute;
  right: 0;
  top: 4px;
  border-left: 6px solid transparent;
  border-right: 6px solid transparent;
  border-bottom: 7px solid #a8a8a8;
}
.fx.down::after {
  border-bottom: none;
  border-top: 7px solid #a8a8a8;
}
.fx sup, .fx sub {
  font-size: 17px;
  line-height: 0;
}
.stk {
  display: inline-flex;
  flex-direction: column;
  font-size: 15px;
  line-height: 15px;
  vertical-align: middle;
}
.style-end {
  height: 100%;
}
.linec {
  width: 141px;
  padding-left: 0;
  border-left: none;
  margin-right: 0;
}
.ln {
  width: 66px;
  height: 2px;
  background: #000;
  margin: 0 8px 0 10px;
}
.lname {
  flex: none;
  width: 14px;
  margin-right: auto;
}
.widthc {
  width: 100px;
  height: 42px;
  padding-left: 3px;
}
.colorc {
  width: 139px;
  margin-left: 1px;
  padding-left: 8px;
  background: #fff;
}
.combo.off {
  border-color: #c8c8c8;
  color: #a0a0a0;
}
.swatch {
  width: 58px;
  height: 28px;
  border: 3px solid #000;
  background: #f0f0f0;
  margin-right: 8px;
}
.zeroc {
  width: 100px;
  height: 42px;
  padding-left: 6px;
}
.zeroc .inner {
  background: #f0f0f0;
  line-height: 30px;
  padding-left: 0;
}
.pat {
  margin: 0 15px 0 8px;
}
.drop {
  width: 0;
  height: 0;
  border-left: 7px solid transparent;
  border-right: 7px solid transparent;
  border-top: 10px solid #000;
  margin-right: 15px;
  flex: none;
}
.drop.dim {
  border-top-color: #a0a0a0;
}
.tb-style .ic {
  margin-right: 14px;
}
.tb-style .tb-end > .ic:last-child {
  margin-right: 22px;
}
.tb-mask .grip {
  margin-right: 8px;
}

/* main area */
.main {
  height: 1209px;
  flex: none;
  display: flex;
  position: relative;
  border-top: 3px solid #808080;
}
.dock {
  width: 62px;
  flex: none;
  border-right: 2px solid #a6a6a6;
}
.toolbox {
  height: 725px;
  width: 60px;
  display: flex;
  flex-direction: column;
  align-items: center;
  border-bottom: 3px solid #a6a6a6;
  border-right: 2px solid #a6a6a6;
  padding-right: 4px;
}
.grip-h {
  width: 54px;
  height: 12px;
  margin: 4px 0 5px;
  border-top: 3px solid #ababab;
  border-bottom: 3px solid #ababab;
  flex: none;
}
.tool {
  width: 46px;
  height: 46px;
  display: flex;
  align-items: center;
  justify-content: center;
  position: relative;
  flex: none;
}
.tool svg {
  width: 32px;
  height: 32px;
}
.tool.on {
  border: 2px solid #fff;
  border-left-color: #b0b0b0;
  border-top-color: #b0b0b0;
  background: repeating-conic-gradient(#fff 0 25%, #e8e8e8 0 50%) 0 0 / 4px 4px;
}
.tool.dis svg {
  filter: drop-shadow(1px 1px 0 #fff);
}
.tool.more::after {
  content: "";
  position: absolute;
  right: 2px;
  bottom: 1px;
  border-left: 8px solid transparent;
  border-bottom: 8px solid #0000c8;
}

/* project explorer */
.explorer {
  width: 638px;
  flex: none;
  padding: 0 20px 3px 8px;
  border-right: 2px solid #a6a6a6;
  display: flex;
  flex-direction: column;
}
.pe-head {
  height: 31px;
  display: flex;
  align-items: center;
  flex: none;
}
.pe-grip {
  width: 547px;
  margin-left: 4px;
  height: 12px;
  border-top: 3px solid #ababab;
  border-bottom: 3px solid #ababab;
}
.pe-btn {
  width: 23px;
  height: 23px;
  border: 1px solid #c0c0c0;
  border-right: 2px solid #808080;
  border-bottom: 2px solid #808080;
  margin-left: 4px;
  display: flex;
  align-items: center;
  justify-content: center;
  font: bold 20px/18px "Liberation Mono", monospace;
}
.pe-btn.tri::after {
  content: "";
  border-left: 6px solid transparent;
  border-right: 6px solid transparent;
  border-top: 8px solid #a0a0a0;
}
.tree {
  height: 467px;
  background: #fff;
  flex: none;
  padding: 0 0 0 8px;
}
.node {
  display: flex;
  align-items: center;
  height: 40px;
}
.dir {
  width: 30px;
  height: 28px;
}
.node-tx {
  font-size: 24px;
  padding: 0 6px;
  margin-left: 5px;
  line-height: 40px;
  letter-spacing: .2px;
}
.child {
  padding-left: 36px;
  position: relative;
}
.branch {
  position: absolute;
  left: 14px;
  top: 0;
  width: 24px;
  height: 22px;
  border-left: 2px dotted #555;
  border-bottom: 2px dotted #555;
}
.sel {
  background: #f0f0f0;
}
.list {
  margin-top: 6px;
  border-top: 3px solid #707070;
  background: #fff;
  height: 669px;
  flex: none;
}
.list-head {
  display: flex;
  height: 49px;
  font-size: 24px;
}
.lh {
  display: flex;
  align-items: center;
  justify-content: space-between;
  border-right: 2px solid #e8e8e8;
  padding: 0 10px 0 22px;
  white-space: nowrap;
  color: #222;
  overflow: hidden;
  flex: none;
}
.w37 { width: 37px; }
.w38 { width: 38px; }
.w116 { width: 116px; }
.w117 { width: 117px; }
.w165 { width: 165px; padding-right: 13px; }
.w10 { width: 10px; padding: 0; }
.w88 { width: 88px; }
.sort {
  border-left: 8px solid transparent;
  border-right: 8px solid transparent;
  border-bottom: 8px solid #909090;
}
.sort.tiny {
  border-left-width: 3px;
  border-right-width: 3px;
  border-bottom-width: 3px;
  margin-left: auto;
}
.lh.w37, .lh.w38 {
  padding: 0 8px 0 0;
}
.lh.last {
  border: none;
  padding: 0 0 0 22px;
  justify-content: flex-start;
}
.clip-v {
  font-weight: normal;
}
.list-row {
  display: flex;
  align-items: center;
  height: 42px;
  padding-left: 8px;
  white-space: nowrap;
}
.li-ic {
  width: 30px;
  height: 32px;
}
.c1 {
  width: 51px;
  padding-left: 12px;
}
.c2 {
  width: 234px;
}
.c3 {
  width: 174px;
}
.c4 {
  width: 88px;
}
.c5 {
  width: 24px;
  overflow: hidden;
}
.hscroll {
  height: 30px;
  display: flex;
  align-items: center;
  flex: none;
}
.thumb {
  width: 498px;
  height: 100%;
  background: #c8c8c8;
  margin: 0 50px 0 0;
}
.hscroll .ar-l {
  margin: 0 9px 0 14px;
}
.ar-l, .ar-r, .ar-u, .ar-d {
  width: 11px;
  height: 11px;
  border-left: 3px solid #606060;
  border-top: 3px solid #606060;
  display: block;
  flex: none;
}
.ar-l { transform: rotate(-45deg); }
.ar-r { transform: rotate(135deg); }
.ar-u { transform: rotate(45deg); }
.ar-d { transform: rotate(225deg); }

/* MDI workspace */
.mdi {
  flex: 1;
  background: #ababab;
  position: relative;
  margin-right: 4px;
  margin-bottom: 3px;
}
.win {
  position: absolute;
  top: 41px;
  height: 697px;
  background: #b9d1ea;
  border: 2px solid #4a4a4a;
  border-radius: 9px 9px 0 0;
  display: flex;
  flex-direction: column;
}
.win.book {
  left: 43px;
  width: 790px;
}
.win.graph {
  left: 849px;
  width: 944px;
  background: #d7e4f2;
}
.win-title {
  height: 62px;
  flex: none;
  display: flex;
  align-items: center;
  padding: 8px 18px 0 17px;
  background: linear-gradient(#a9c3dc, #c0d6ec);
  border-radius: 7px 7px 0 0;
}
.graph .win-title {
  background: linear-gradient(#bccbda, #d7e4f2);
  padding-right: 16px;
}
.win-ic {
  width: 32px;
  height: 32px;
  margin-right: 9px;
}
.win-name {
  font-size: 24px;
  color: #222;
  margin-top: -2px;
}
.win-name.dim {
  color: #a0a0a8;
}
.win-btns {
  margin-left: auto;
  display: flex;
  gap: 6px;
}
.wb {
  width: 62px;
  height: 35px;
  border: 2px solid #7c93b3;
  border-radius: 3px;
  background: linear-gradient(#c2d5ea, #8facc8);
  display: flex;
  align-items: center;
  justify-content: center;
}
.wb.close {
  background: linear-gradient(#e0a090 0%, #d88a78 45%, #b04028 55%, #c06048 100%);
  border-color: #7a3a3a;
}
.wb.plain {
  background: linear-gradient(#d2dfee, #bccde2);
  border-color: #8a9ab4;
}
.wx {
  width: 28px;
  height: 24px;
}
.wmin {
  width: 20px;
  height: 10px;
  border: 2px solid #666;
  background: #fff;
  margin-top: 8px;
}
.wmax {
  width: 20px;
  height: 20px;
  border: 2px solid #667;
  background: radial-gradient(#556 3px, #dde 4px);
}
.win-body {
  flex: 1;
  margin: 0 14px 16px;
  background: #fff;
  border-top: 3px solid #808080;
  display: flex;
  min-height: 0;
}
.book .win-body {
  border-left: 3px solid #707070;
}
.graph .win-body {
  border-left: 3px solid #808080;
  margin-right: 16px;
  border-bottom: 2px solid #e0e0e0;
}

/* worksheet */
.sheet {
  flex: 1;
  display: flex;
  flex-direction: column;
  min-width: 0;
  font-family: "Liberation Sans", "Noto Sans CJK SC", sans-serif;
  padding-bottom: 3px;
}
.sheet-main {
  flex: 1;
  display: flex;
  min-height: 0;
  overflow: hidden;
  background: #e0e0e5;
}
.grid {
  width: 441px;
  flex: none;
  overflow: hidden;
  border-right: 5px solid #333;
}
.gr {
  display: flex;
  height: 32px;
}
.gr.head {
  height: 46px;
}
.rh {
  width: 173px;
  flex: none;
  background: #e0e0e5;
  border-right: 3px solid #000;
  border-bottom: 3px solid #000;
  text-align: right;
  padding-right: 9px;
  line-height: 31px;
  font-size: 25px;
  color: #111;
}
.ca {
  width: 133px;
  flex: none;
  background: #fff;
  border-bottom: 2px solid #c0c0c0;
  padding-left: 6px;
  line-height: 32px;
  font-size: 24px;
  white-space: nowrap;
}
.cb {
  width: 130px;
  flex: none;
  background: #000;
  border-left: 5px solid #333;
  border-bottom: 2px solid #505050;
  color: #fff;
  padding-left: 5px;
  line-height: 31px;
  font-size: 24px;
}
.head .ca {
  background: #e0e0e5;
  text-align: center;
  padding: 0;
  line-height: 44px;
  font-size: 25px;
  border-bottom: 2px solid #333;
  border-left: 2px solid #888;
}
.head .cb {
  background: #00003c;
  text-align: center;
  padding: 0;
  line-height: 44px;
}
.meta .ca {
  background: #f9f7c6;
  border-bottom: 2px solid #d8d8c0;
}
.meta .cb {
  background: #00003c;
  border-bottom: none;
}
.vscroll {
  width: 35px;
  margin-left: auto;
  margin-right: 4px;
  flex: none;
  background: #f0f0f0;
  display: flex;
  flex-direction: column;
  align-items: center;
  padding-top: 14px;
  position: relative;
}
.vthumb {
  width: 100%;
  height: 206px;
  background: #cdcdcd;
  margin: 9px 0 314px;
}
.sheet-foot {
  height: 32px;
  flex: none;
  display: flex;
  align-items: center;
  background: #f0f0f0;
  border-top: 2px solid #000;
  padding-left: 2px;
}
.nav-btn {
  width: 33px;
  height: 29px;
  border: 2px solid #fff;
  border-right-color: #808080;
  border-bottom-color: #808080;
  display: flex;
  align-items: center;
  justify-content: center;
}
.tl {
  border-top: 7px solid transparent;
  border-bottom: 7px solid transparent;
  border-right: 9px solid #888;
}
.tr {
  border-top: 7px solid transparent;
  border-bottom: 7px solid transparent;
  border-left: 9px solid #888;
}
.tab {
  width: 146px;
  height: 32px;
  margin-left: 3px;
}
.tab text {
  font: bold 27px "Liberation Mono", monospace;
  letter-spacing: 1px;
}
.tab-rest {
  width: 315px;
  height: 100%;
  background: #c0c0c0;
  margin-left: -5px;
  border-bottom: 2px solid #888;
  flex: none;
}
.split {
  width: 9px;
  height: 100%;
  border-left: 3px solid #000;
  border-right: 1px solid #000;
  flex: none;
}
.fscroll {
  width: 180px;
  height: 100%;
  display: flex;
  align-items: center;
  flex: none;
  background: #f0f0f0;
}
.fscroll .ar-l {
  margin: 0 12px 0 14px;
}
.fthumb {
  width: 112px;
  height: 100%;
  background: #cdcdcd;
  margin-right: 8px;
}
.corner {
  width: 20px;
  height: 18px;
  margin-left: 12px;
  background: radial-gradient(circle, #aaa 1.5px, transparent 2px) 0 0 / 6px 6px;
}

/* graph page */
.page {
  flex: 1;
  position: relative;
  min-width: 0;
  background: #fff;
}
.page-side {
  width: 41px;
  flex: none;
  background: #bdbdbd;
}
.plot {
  width: 866px;
  height: 612px;
}
.layer {
  position: absolute;
  left: 3px;
  top: 2px;
  width: 36px;
  height: 38px;
  background: #b0b0b0;
  border: 2px solid #fff;
  border-right-color: #808080;
  border-bottom-color: #808080;
  text-align: center;
  font: 28px/33px "Liberation Sans", sans-serif;
}
.lg {
  font: 16px "Liberation Sans", sans-serif;
}
.ytick text {
  font: 13px "Liberation Sans", sans-serif;
  fill: #777;
  text-anchor: end;
  letter-spacing: 1px;
}
.xtick text {
  font: 13px "Noto Sans CJK SC", sans-serif;
  fill: #999;
  text-anchor: middle;
  letter-spacing: 3px;
}
.axt {
  font: 16px "Liberation Sans", sans-serif;
}

/* dropdown */
.dropdown {
  position: absolute;
  left: 1005px;
  top: -129px;
  width: 407px;
  height: 342px;
  background: #f0f0f0;
  border: 2px solid #a0a0a0;
  box-shadow: 4px 4px 4px rgba(0, 0, 0, .4);
  padding: 5px 4px 0;
  z-index: 5;
}
.dd-item {
  height: 42px;
  display: flex;
  align-items: center;
  justify-content: space-between;
  padding: 0 40px 2px 48px;
  letter-spacing: -.25px;
  position: relative;
  white-space: nowrap;
}
.dd-item.hot {
  background: #0078d7;
  color: #fff;
  margin: 0 -1px;
  padding-left: 49px;
}
.dd-item.off {
  color: #808080;
}
.dropdown hr {
  border: none;
  height: 3px;
  background: #a0a0a0;
  border-bottom: 1px solid #fff;
  margin: 4px 0 4px 2px;
}
.dd-arrow {
  position: absolute;
  right: 12px;
  top: 9px;
  border-top: 7px solid transparent;
  border-bottom: 7px solid transparent;
  border-left: 6px solid #000;
}
.key {
  margin-right: -8px;
}

/* bottom toolbars */
.row-bottom {
  height: 62px;
  flex: none;
  border-bottom: 4px solid #a6a6a6;
}
.ib {
  margin-right: 15px;
}
.tb-plot {
  width: 747px;
  border-right: 2px solid #a6a6a6;
}
.tb-plot .grip {
  margin-right: 7px;
}
.tb-3d {
  width: 514px;
  border-right: 2px solid #a6a6a6;
}
.tb-3d .grip {
  margin-right: 9px;
  margin-left: 5px;
}
.ic3 {
  margin-right: 16px;
}
.drop.narrow {
  margin-right: 15px;
}
.sep3 {
  margin: 0 8px 0 4px;
}
.tb-align {
  width: 778px;
  border-right: 2px solid #a6a6a6;
}
.al {
  margin-right: 16px;
}

/* status bar */
.status {
  flex: 1;
  display: flex;
  align-items: center;
  position: relative;
  border-top: 2px solid #fff;
  font-size: 25px;
  white-space: nowrap;
}
.status > span {
  height: 34px;
  line-height: 32px;
  flex: none;
}
.st-msg {
  width: 1664px;
  padding-left: 4px;
}
.st-au {
  width: 110px;
  text-align: right;
  padding-right: 8px;
  border-right: 2px solid #d8d8d8;
}
.st-gap {
  width: 345px;
  border-right: 2px solid #d8d8d8;
}
.st-small {
  width: 16px;
  border-right: 2px solid #d8d8d8;
}
.st-sel {
  width: 316px;
  padding-left: 10px;
  border-right: 2px solid #d8d8d8;
  overflow: hidden;
  letter-spacing: -.3px;
}
.st-rad {
  width: 106px;
  padding-left: 9px;
  border-right: 2px solid #d8d8d8;
}
.status .mark {
  position: absolute;
  left: 2309px;
  top: 2px;
  color: rgba(70, 70, 70, .7);
  font: 21px/32px "Liberation Sans", sans-serif;
}
```
